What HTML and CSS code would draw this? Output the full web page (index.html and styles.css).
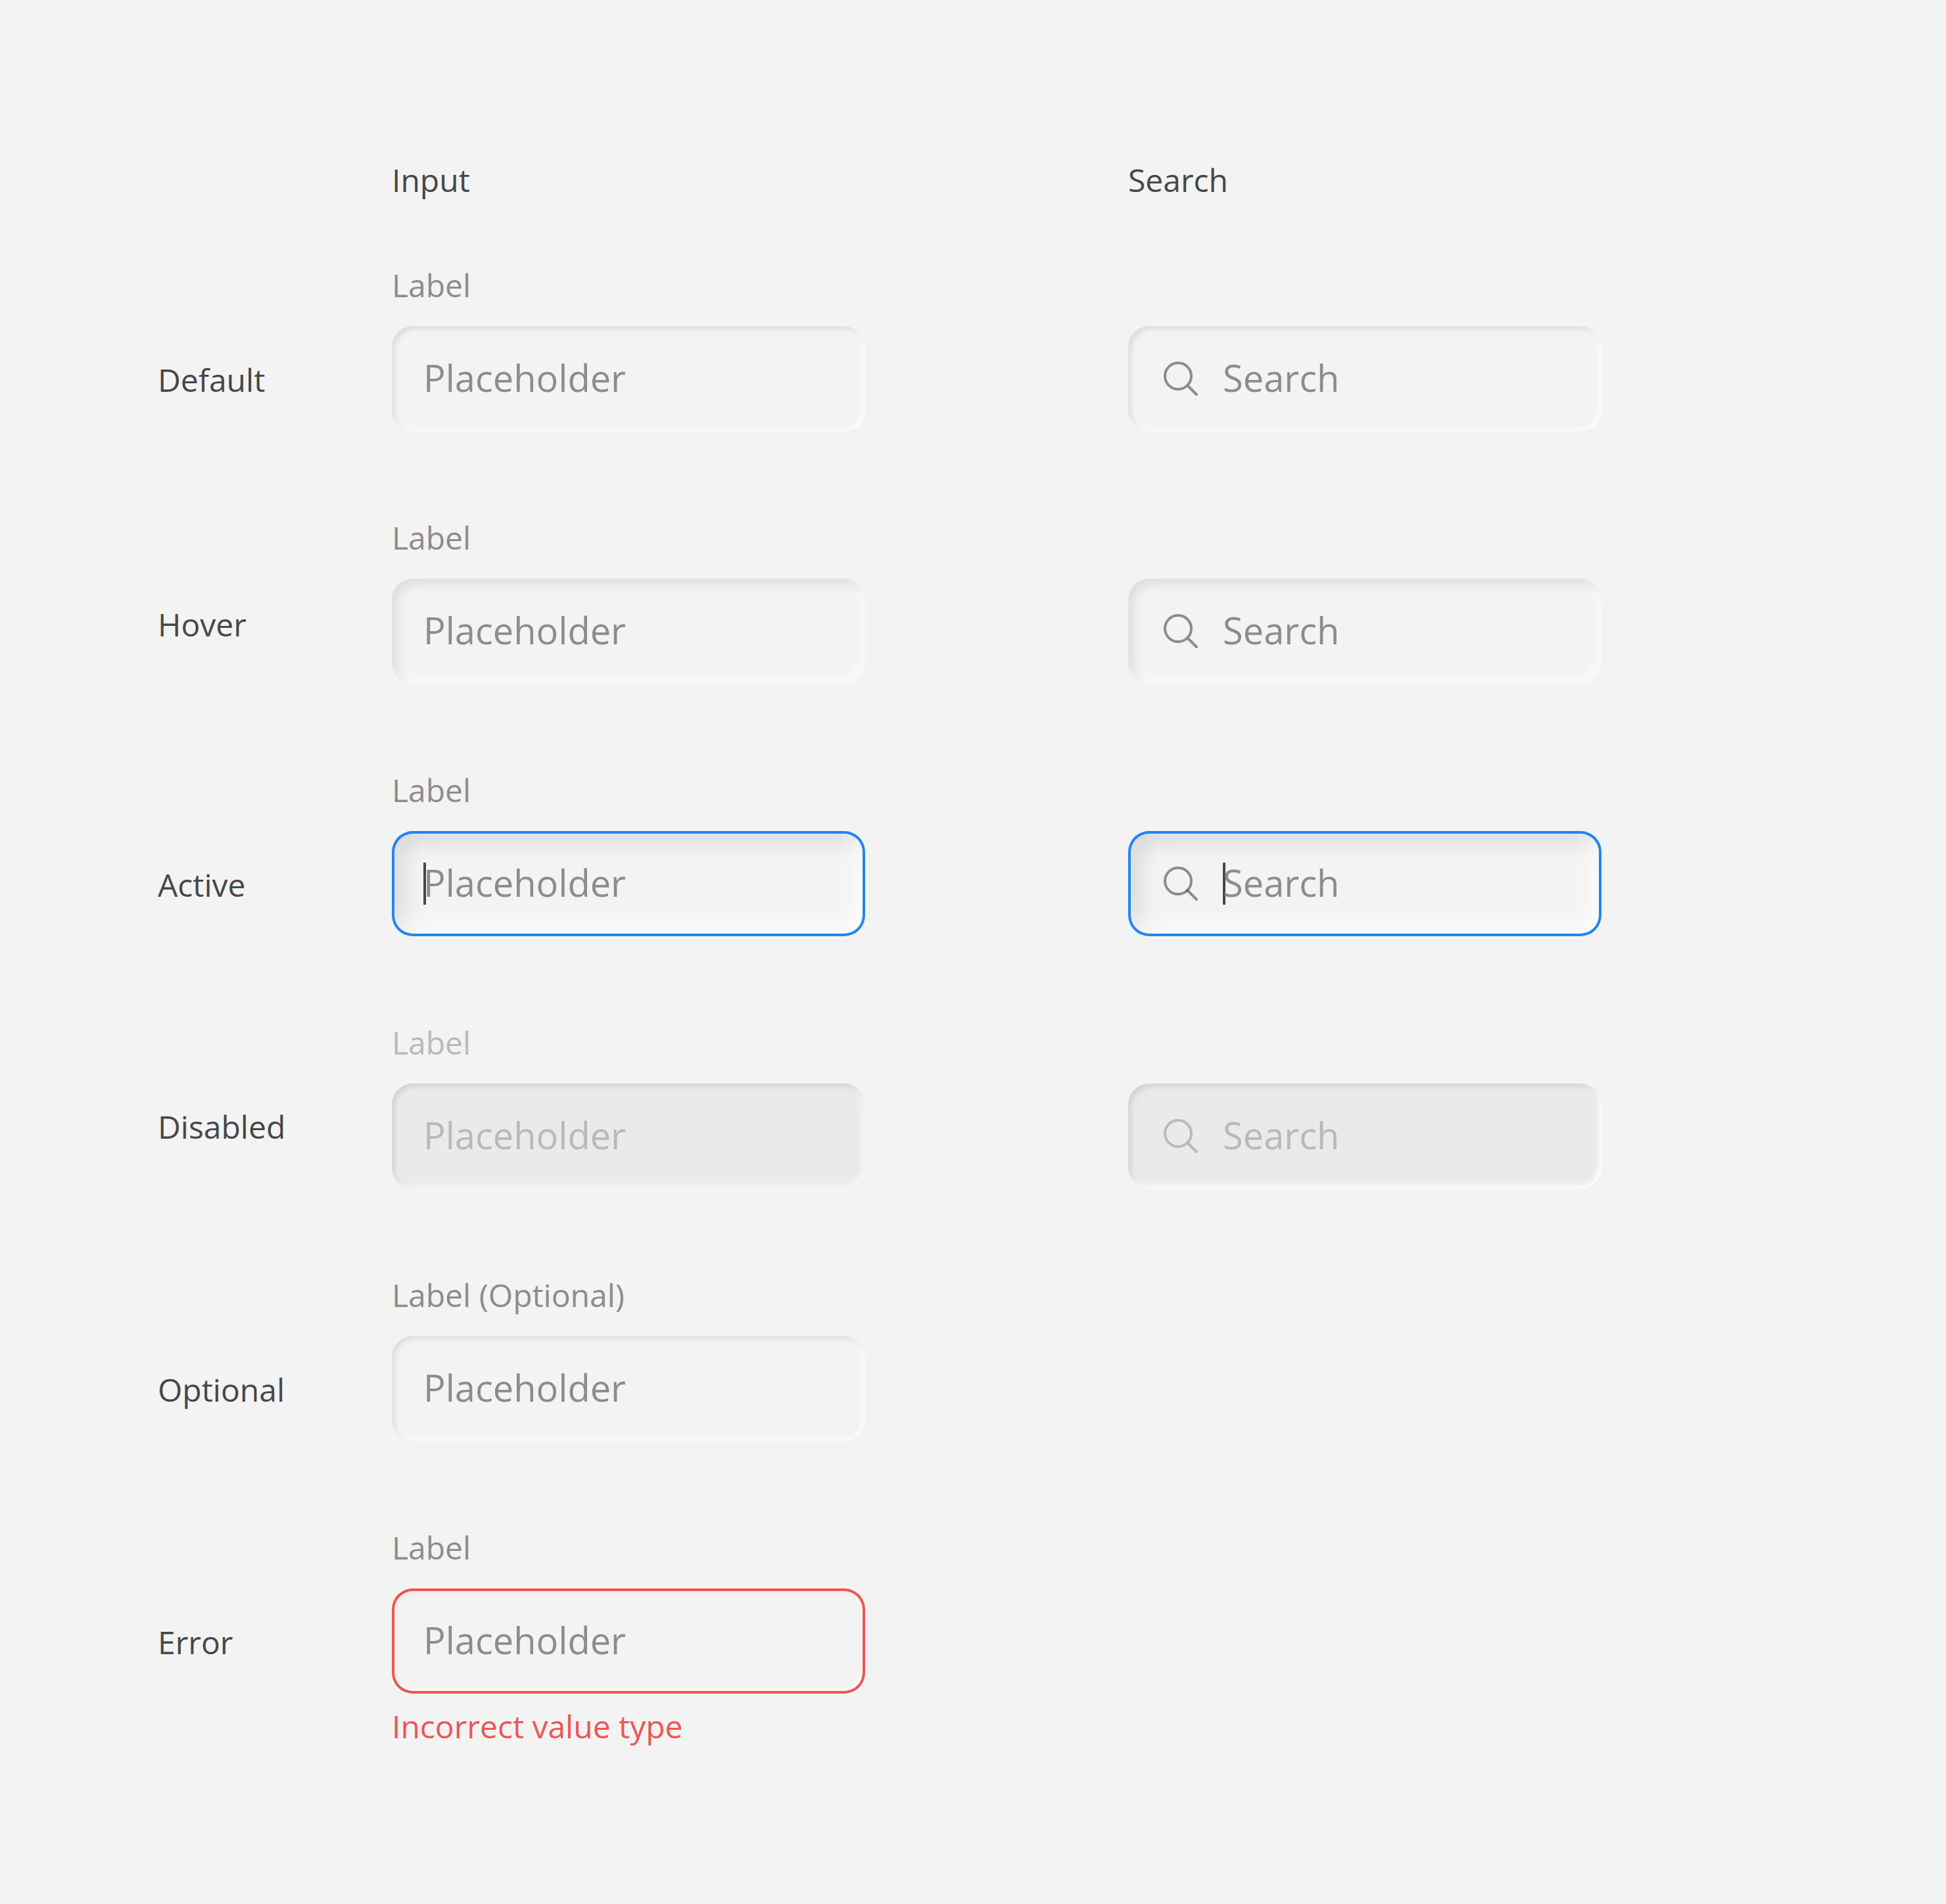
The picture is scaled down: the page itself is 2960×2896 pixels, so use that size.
FILE: index.html
```html
<!DOCTYPE html>
<html lang="en">
<head>
<meta charset="utf-8">
<title>Input states</title>
<link rel="stylesheet" href="styles.css">
</head>
<body>
<svg class="sprite" aria-hidden="true">
  <symbol id="icon-search" viewBox="0 0 56 56">
    <circle cx="24" cy="22" r="20"/>
    <path d="M38 36L52 50"/>
  </symbol>
</svg>
<main class="sheet">
  <header class="row head">
    <span></span>
    <h2 class="title">Input</h2>
    <h2 class="title">Search</h2>
  </header>

  <section class="row">
    <h3 class="state">Default</h3>
    <div class="field">
      <span class="label">Label</span>
      <div class="box"><span class="text">Placeholder</span></div>
    </div>
    <div class="field">
      <div class="box"><svg class="icon"><use href="#icon-search"/></svg><span class="text">Search</span></div>
    </div>
  </section>

  <section class="row">
    <h3 class="state state-hover">Hover</h3>
    <div class="field">
      <span class="label">Label</span>
      <div class="box hover"><span class="text">Placeholder</span></div>
    </div>
    <div class="field">
      <div class="box hover"><svg class="icon"><use href="#icon-search"/></svg><span class="text">Search</span></div>
    </div>
  </section>

  <section class="row">
    <h3 class="state">Active</h3>
    <div class="field">
      <span class="label">Label</span>
      <div class="box active"><i class="caret"></i><span class="text">Placeholder</span></div>
    </div>
    <div class="field">
      <div class="box active"><svg class="icon"><use href="#icon-search"/></svg><i class="caret"></i><span class="text">Search</span></div>
    </div>
  </section>

  <section class="row">
    <h3 class="state state-disabled">Disabled</h3>
    <div class="field off">
      <span class="label">Label</span>
      <div class="box disabled"><span class="text">Placeholder</span></div>
    </div>
    <div class="field off">
      <div class="box disabled bright"><svg class="icon"><use href="#icon-search"/></svg><span class="text">Search</span></div>
    </div>
  </section>

  <section class="row">
    <h3 class="state">Optional</h3>
    <div class="field">
      <span class="label">Label (Optional)</span>
      <div class="box"><span class="text">Placeholder</span></div>
    </div>
  </section>

  <section class="row">
    <h3 class="state">Error</h3>
    <div class="field">
      <span class="label">Label</span>
      <div class="box error"><span class="text">Placeholder</span></div>
      <span class="message">Incorrect value type</span>
    </div>
  </section>
</main>
</body>
</html>
```
FILE: styles.css
```css
* { box-sizing: border-box; }

body {
  margin: 0;
  background: #f3f3f3;
  color: #474747;
  font-family: "Open Sans", sans-serif;
  font-size: 48px;
  line-height: 64px;
}

.sprite { display: block; width: 0; height: 0; }

.sheet {
  width: 2960px;
  height: 2896px;
  padding: 242px 0 0 240px;
}

.row {
  display: grid;
  grid-template-columns: 356px 1120px 720px;
  height: 384px;
}

.head { height: 160px; }

.title, .state {
  margin: 0;
  font-size: 48px;
  font-weight: 400;
}

.state { padding-top: 144px; }
.state-hover { padding-top: 132px; }
.state-disabled { padding-top: 128px; }

.field {
  display: flex;
  flex-direction: column;
  padding-top: 94px;
  color: #8c8c8c;
}

.label { margin-top: -94px; height: 94px; }

.box {
  display: flex;
  align-items: center;
  width: 720px;
  height: 160px;
  padding: 0 48px;
  border-radius: 32px;
  background: #f3f3f3;
  box-shadow:
    inset -4px -4px 8px rgba(255, 255, 255, 0.7),
    inset 4px 4px 8px rgba(0, 0, 0, 0.1);
}

.hover {
  box-shadow:
    inset -8px -8px 16px rgba(255, 255, 255, 0.55),
    inset 8px 8px 16px rgba(0, 0, 0, 0.09);
}

.active {
  box-shadow:
    inset 0 0 0 4px #2186f0,
    inset -16px -16px 32px rgba(255, 255, 255, 0.75),
    inset 16px 16px 32px rgba(0, 0, 0, 0.11);
}

.off { color: #b9b9b9; }

.disabled {
  background: #eaeaea;
  box-shadow:
    inset -4px -4px 8px rgba(255, 255, 255, 0.66),
    inset 4px 4px 8px rgba(0, 0, 0, 0.12);
}

.bright {
  box-shadow:
    inset -4px -4px 8px #fff,
    inset 4px 4px 8px rgba(0, 0, 0, 0.12);
}

.error {
  box-shadow:
    inset 0 0 0 4px #eb5757,
    inset -4px -4px 8px #fff,
    inset 4px 4px 8px rgba(0, 0, 0, 0.08);
}

.text {
  font-size: 56px;
  line-height: 80px;
  padding-bottom: 4px;
}

.caret {
  width: 4px;
  height: 64px;
  margin-right: -4px;
  background: #474747;
}

.icon {
  width: 56px;
  height: 56px;
  margin: 4px 36px 0 4px;
  fill: none;
  stroke: currentColor;
  stroke-width: 4;
  stroke-linecap: round;
}

/* translucent strokes darken where the handle meets the lens */
.active .icon { stroke: rgba(71, 71, 71, 0.6); }

.message { margin-top: 18px; color: #eb5757; }
```
